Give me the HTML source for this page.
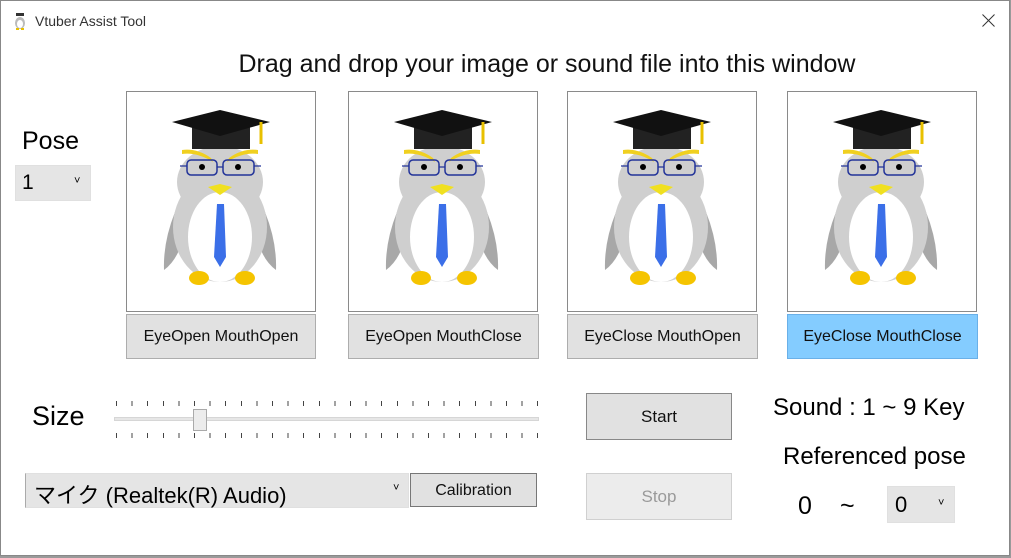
<!DOCTYPE html>
<html><head><meta charset="utf-8"><style>
*{margin:0;padding:0;box-sizing:border-box}
body{width:1011px;height:558px;background:#9a9a9a;position:relative;overflow:hidden;font-family:"Liberation Sans","Noto Sans CJK JP",sans-serif;color:#000}
.win{position:absolute;left:0;top:0;width:1010px;height:556px;background:#fff;border:1px solid #888}
.a{position:absolute;white-space:nowrap}
.box{position:absolute;top:90px;width:190px;height:221px;border:1px solid #8a8a8a;background:#fff}
.btn{position:absolute;background:#e1e1e1;border:1px solid #adadad;font-size:16px;display:flex;align-items:center;justify-content:center;color:#111}
.sel{position:absolute;background:#e5e5e5;border:1px solid #e0e0e0}
.tick{position:absolute;left:115px;width:422px;height:5px;background:repeating-linear-gradient(90deg,#444 0 1px,transparent 1px 15.6px)}
</style></head><body>
<div class="win">
<svg class="a" style="left:12px;top:11px" width="14" height="18" viewBox="0 0 14 18"><rect x="3" y="1" width="8" height="3" fill="#333"/><ellipse cx="7" cy="11" rx="5" ry="6" fill="#bbb"/><ellipse cx="7" cy="12" rx="3" ry="4" fill="#fff"/><rect x="3" y="16" width="3" height="2" fill="#e8c000"/><rect x="8" y="16" width="3" height="2" fill="#e8c000"/></svg>
<div class="a" style="left:34px;top:12px;font-size:14px;color:#333">Vtuber Assist Tool</div>
<svg class="a" style="left:981px;top:13px" width="13" height="13"><path d="M0.5 0.5 L12.5 12.5 M12.5 0.5 L0.5 12.5" stroke="#333" stroke-width="1"/></svg>
<div class="a" style="left:0;width:1092px;text-align:center;top:49px;font-size:25px;color:#111">Drag and drop your image or sound file into this window</div>
<div class="a" style="left:21px;top:126px;font-size:25px">Pose</div>
<div class="sel" style="left:14px;top:164px;width:76px;height:36px"><span class="a" style="left:6px;top:5px;font-size:21px">1</span><span class="a" style="left:58px;top:9px;font-size:11px">˅</span></div>

<svg width="0" height="0" style="position:absolute"><defs><g id="p">
<path d="M48 120 Q36 150 37 178 Q55 165 60 128Z" fill="#a8a8a8"/>
<path d="M138 120 Q150 150 149 178 Q131 165 126 128Z" fill="#a8a8a8"/>
<ellipse cx="93" cy="90" rx="43" ry="36" fill="#cfcfcf"/>
<ellipse cx="93" cy="135" rx="47" ry="55" fill="#cfcfcf"/>
<ellipse cx="93" cy="145" rx="32" ry="45" fill="#fff"/>
<ellipse cx="72" cy="186" rx="10" ry="7" fill="#f5c400"/>
<ellipse cx="118" cy="186" rx="10" ry="7" fill="#f5c400"/>
<path d="M55 62 Q70 60 86 70 L84 66 Q70 56 55 58Z M131 62 Q116 60 100 70 L102 66 Q116 56 131 58Z" fill="#f0d020"/>
<rect x="60" y="68" width="30" height="15" rx="4" fill="none" stroke="#223399" stroke-width="1.5"/>
<rect x="96" y="68" width="31" height="15" rx="4" fill="none" stroke="#223399" stroke-width="1.5"/>
<path d="M90 75 H96 M53 74 H60 M127 74 H134" stroke="#223399" stroke-width="1.3"/>
<circle cx="75" cy="75" r="3" fill="#000"/><circle cx="111" cy="75" r="3" fill="#000"/>
<path d="M81 95 L93 92 L105 95 L93 103Z" fill="#f0e020"/>
<path d="M90 112 H97 L99 165 L93 175 L87 165Z" fill="#3b6fe8"/>
<rect x="65" y="34" width="58" height="23" fill="#222"/>
<path d="M45 30 L93 18 L143 30 L93 44Z" fill="#111"/>
<path d="M134 30 V52" stroke="#e8c000" stroke-width="3"/>
</g></defs></svg>

<div class="box" style="left:125px"><svg width="190" height="221"><use href="#p"/></svg></div>
<div class="box" style="left:347px"><svg width="190" height="221"><use href="#p"/></svg></div>
<div class="box" style="left:566px"><svg width="190" height="221"><use href="#p"/></svg></div>
<div class="box" style="left:786px"><svg width="190" height="221"><use href="#p"/></svg></div>
<div class="btn" style="left:125px;top:313px;width:190px;height:45px">EyeOpen MouthOpen</div>
<div class="btn" style="left:347px;top:313px;width:191px;height:45px">EyeOpen MouthClose</div>
<div class="btn" style="left:566px;top:313px;width:191px;height:45px">EyeClose MouthOpen</div>
<div class="btn" style="left:786px;top:313px;width:191px;height:45px;background:#84ccff;border-color:#6ab0e8">EyeClose MouthClose</div>

<div class="a" style="left:31px;top:400px;font-size:27px">Size</div>
<div class="tick" style="top:400px"></div>
<div class="tick" style="top:432px"></div>
<div class="a" style="left:113px;top:416px;width:425px;height:4px;background:#e6e6e6;border:1px solid #d6d6d6"></div>
<div class="a" style="left:192px;top:408px;width:14px;height:22px;background:#ececec;border:1px solid #aaa"></div>

<div class="sel" style="left:24px;top:472px;width:384px;height:35px;border-left:1px solid #aaa"><span class="a" style="left:8px;top:4px;font-size:22px">マイク (Realtek(R) Audio)</span><span class="a" style="left:367px;top:8px;font-size:11px">˅</span></div>
<div class="btn" style="left:409px;top:472px;width:127px;height:34px;font-size:16px;border-color:#777;padding-top:2px">Calibration</div>

<div class="btn" style="left:585px;top:392px;width:146px;height:47px;font-size:17px;border-color:#888">Start</div>
<div class="btn" style="left:585px;top:472px;width:146px;height:47px;font-size:17px;background:#ececec;border-color:#d0d0d0;color:#9a9a9a">Stop</div>

<div class="a" style="left:772px;top:393px;font-size:24px">Sound : 1 ~ 9 Key</div>
<div class="a" style="left:782px;top:442px;font-size:24px">Referenced pose</div>
<div class="a" style="left:797px;top:491px;font-size:25px">0</div>
<div class="a" style="left:839px;top:491px;font-size:25px">~</div>
<div class="sel" style="left:886px;top:485px;width:68px;height:37px"><span class="a" style="left:7px;top:5px;font-size:22px">0</span><span class="a" style="left:50px;top:10px;font-size:11px">˅</span></div>
</div>
</body></html>
